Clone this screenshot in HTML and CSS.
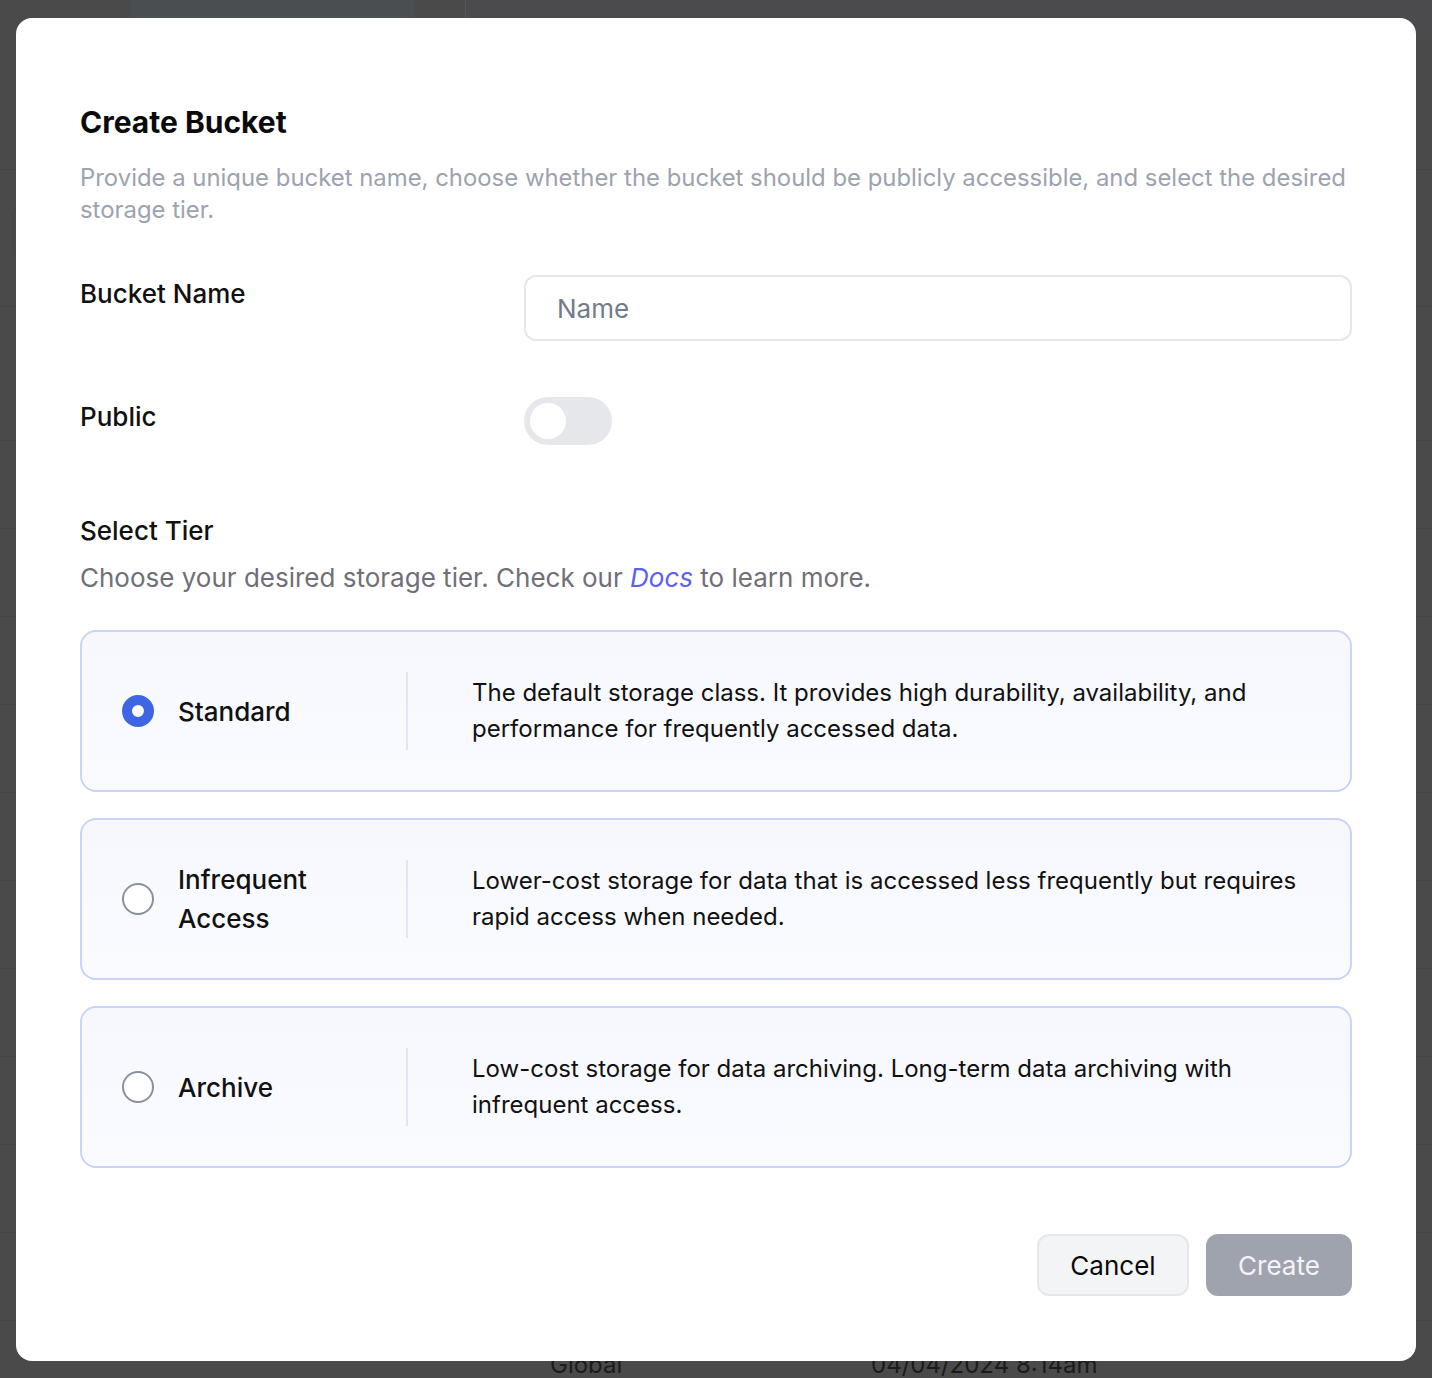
FILE: index.html
```html
<!DOCTYPE html>
<html lang="en">
<head>
<meta charset="utf-8">
<title>Create Bucket</title>
<link rel="stylesheet" href="styles.css">
</head>
<body>
<div class="page">
  <div class="page-top">
    <div class="top-a"></div>
    <div class="top-b"></div>
  </div>
  <div class="page-head"></div>
  <div class="page-tools"><div class="tool-box"></div></div>
  <div class="rows">
    <div class="row"></div>
    <div class="row"></div>
    <div class="row"></div>
    <div class="row"></div>
    <div class="row"></div>
    <div class="row"></div>
    <div class="row"></div>
    <div class="row"></div>
    <div class="row"></div>
    <div class="row"></div>
    <div class="row"><span class="cell-region">Global</span><span class="cell-date">04/04/2024 8:14am</span></div>
  </div>
</div>

<div class="modal" role="dialog" aria-labelledby="modal-title">
  <h1 id="modal-title" class="title">Create Bucket</h1>
  <p class="subtitle">Provide a unique bucket name, choose whether the bucket should be publicly accessible, and select the desired storage tier.</p>

  <div class="form-grid">
    <label class="field-label label-name" for="bucket-name">Bucket Name</label>
    <div class="input-box"><span class="placeholder">Name</span></div>

    <span class="field-label label-public">Public</span>
    <div class="toggle"><span class="knob"></span></div>
  </div>

  <h2 class="section-title">Select Tier</h2>
  <p class="section-desc">Choose your desired storage tier. Check our <a class="docs" href="#">Docs</a> to learn more.</p>

  <div class="tiers">
    <div class="tier">
      <span class="radio checked"></span>
      <span class="tier-name">Standard</span>
      <span class="divider"></span>
      <p class="tier-desc">The default storage class. It provides high durability, availability, and performance for frequently accessed data.</p>
    </div>
    <div class="tier">
      <span class="radio"></span>
      <span class="tier-name">Infrequent Access</span>
      <span class="divider"></span>
      <p class="tier-desc">Lower-cost storage for data that is accessed less frequently but requires rapid access when needed.</p>
    </div>
    <div class="tier">
      <span class="radio"></span>
      <span class="tier-name">Archive</span>
      <span class="divider"></span>
      <p class="tier-desc">Low-cost storage for data archiving. Long-term data archiving with infrequent access.</p>
    </div>
  </div>

  <div class="actions">
    <button class="btn btn-cancel">Cancel</button>
    <button class="btn btn-create">Create</button>
  </div>
</div>
</body>
</html>
```

FILE: styles.css
```css
* { box-sizing: border-box; }

html, body {
  margin: 0;
  padding: 0;
}

body {
  width: 1432px;
  height: 1378px;
  overflow: hidden;
  background: #4a4a4a;
  font-family: Inter, "Noto Sans", sans-serif;
  color: #111;
}

/* ---------- dimmed page behind the modal ---------- */
.page {
  height: 1378px;
  display: flex;
  flex-direction: column;
}

.page-top {
  height: 40px;
  flex: none;
  display: flex;
  gap: 50px;
  padding-left: 130px;
}
.top-a {
  width: 285px;
  background: #4b4e50;
}
.top-b {
  flex: 1;
  background: #4b4a4d;
  border-left: 1px solid #545454;
}

.page-head {
  height: 130px;
  flex: none;
  border-bottom: 1px solid #444;
}

.page-tools {
  height: 137px;
  flex: none;
  padding: 36px 0 0 12px;
  border-bottom: 1px solid #444;
}
.tool-box {
  width: 40px;
  height: 52px;
  border: 2px solid #474747;
  border-radius: 10px;
}

.rows {
  display: flex;
  flex-direction: column;
  padding-top: 133px;
}
.row {
  height: 88px;
  flex: none;
  border-top: 1px solid #444;
  display: flex;
  align-items: center;
  font-size: 24px;
  color: #1b1b1b;
}
.cell-region { margin-left: 550px; width: 321px; }

/* ---------- modal ---------- */
.modal {
  position: fixed;
  top: 18px;
  left: 16px;
  width: 1400px;
  height: 1343px;
  background: #fff;
  border-radius: 16px;
  padding: 86px 64px 65px;
  display: flex;
  flex-direction: column;
}

.title {
  margin: 0;
  font-size: 30px;
  line-height: 36px;
  font-weight: 700;
  color: #0a0a0a;
}

.subtitle {
  margin: 22px 0 0;
  font-size: 23.9px;
  line-height: 32px;
  color: #9ca3af;
}

.form-grid {
  margin-top: 49px;
  display: grid;
  grid-template-columns: 444px 1fr;
  row-gap: 56px;
  align-items: start;
}

.field-label {
  font-size: 26px;
  line-height: 32px;
  font-weight: 500;
  color: #111;
}
.label-name { padding-top: 3px; }
.label-public { padding-top: 4px; }

.input-box {
  height: 66px;
  border: 2px solid #e5e7eb;
  border-radius: 12px;
  display: flex;
  align-items: center;
  padding-left: 31px;
}
.placeholder {
  font-size: 26px;
  color: #737b89;
}

.toggle {
  width: 88px;
  height: 48px;
  border-radius: 24px;
  background: #e5e7eb;
  padding: 6px;
  display: flex;
}
.knob {
  width: 36px;
  height: 36px;
  border-radius: 50%;
  background: #fff;
}

.section-title {
  margin: 70px 0 0;
  font-size: 26px;
  line-height: 32px;
  font-weight: 500;
  color: #111;
}

.section-desc {
  margin: 15px 0 0;
  font-size: 26px;
  line-height: 32px;
  color: #6f6f78;
}
.docs {
  color: #5b5ff2;
  font-style: italic;
  text-decoration: none;
}

.tiers {
  margin-top: 36px;
  display: flex;
  flex-direction: column;
  gap: 26px;
}

.tier {
  height: 162px;
  border: 2px solid #cad3f8;
  border-radius: 16px;
  background: linear-gradient(180deg, #f7f8fe 0%, #fafbff 100%);
  display: flex;
  align-items: center;
  padding: 0 40px;
}

.radio {
  flex: none;
  width: 32px;
  height: 32px;
  border-radius: 50%;
  border: 2px solid #8a909c;
  background: #fff;
}
.radio.checked {
  border: 10px solid #3d65e4;
}

.tier-name {
  flex: none;
  width: 190px;
  margin-left: 24px;
  font-size: 26px;
  line-height: 39px;
  font-weight: 500;
  color: #111;
}

.divider {
  flex: none;
  width: 2px;
  height: 78px;
  margin-left: 38px;
  background: #e0e6f8;
}

.tier-desc {
  margin: 0 0 0 64px;
  font-size: 24px;
  line-height: 36px;
  color: #111;
}

.actions {
  margin-top: 66px;
  display: flex;
  justify-content: flex-end;
  gap: 17px;
}

.btn {
  height: 62px;
  border-radius: 12px;
  font-family: Inter, "Noto Sans", sans-serif;
  font-size: 26px;
  padding: 0;
  cursor: pointer;
}
.btn-cancel {
  width: 152px;
  background: #f3f4f6;
  border: 2px solid #e5e7eb;
  color: #0a0a0a;
}
.btn-create {
  width: 146px;
  background: #9fa3ad;
  border: none;
  color: #f3f4f6;
}
```
